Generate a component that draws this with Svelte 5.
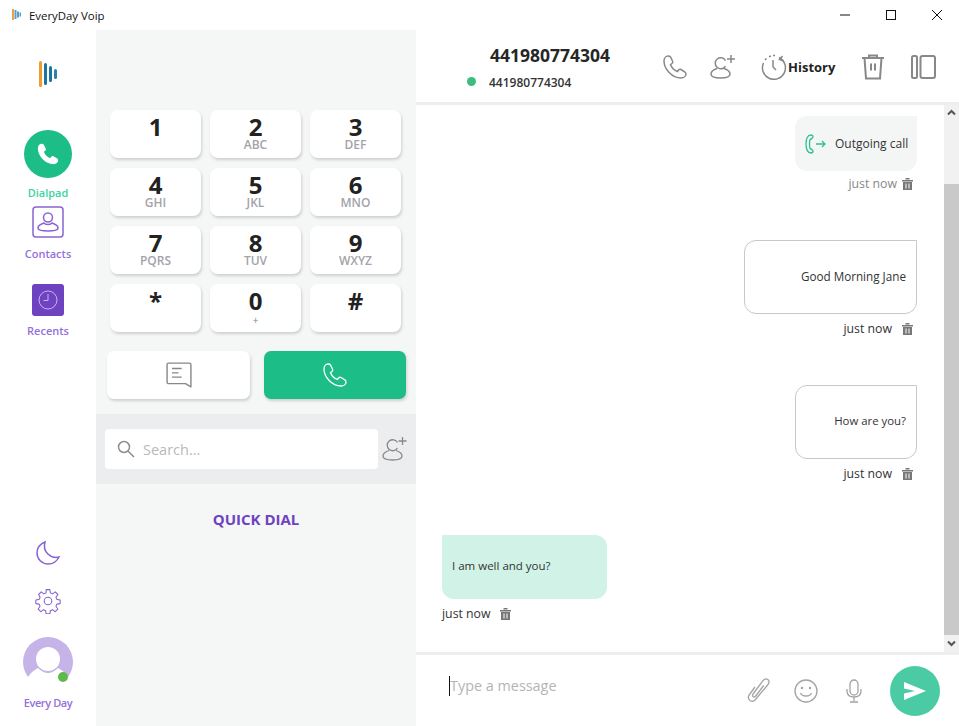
<script>
  const KEYS = [
    { d: '1', s: '' }, { d: '2', s: 'ABC' }, { d: '3', s: 'DEF' },
    { d: '4', s: 'GHI' }, { d: '5', s: 'JKL' }, { d: '6', s: 'MNO' },
    { d: '7', s: 'PQRS' }, { d: '8', s: 'TUV' }, { d: '9', s: 'WXYZ' },
    { d: '*', s: '' }, { d: '0', s: '+' }, { d: '#', s: '' },
  ];
  const PHONE = 'M6 2C4 2 2 4 2 7c0 8 8 17 17 17 3 0 5-2 5-4 0-1-.5-1.500-1-2l-4-2.500c-1-.5-2 0-2.500.5l-1 1.500c-3-1-6-4-7-7l1.500-1c.7-.5 1-1.500.5-2.500l-2-4C8 2.300 7 2 6 2z';
  const BIN = 'M0 2h11v1.500H0zM3.500 0h4v1.500h-4zM1 4h9v8H1zM3.500 5.500v5h1v-5zM6.500 5.500v5h1v-5z';
</script>

<div class="window">
  <header class="titlebar">
    <svg class="app-logo" width="10" height="12" viewBox="0 0 10 12">
      <rect x="0" y="0" width="2" height="11" fill="#f0a04b" />
      <rect x="2.500" y="1" width="2" height="9" fill="#5a9fc6" />
      <rect x="5" y="2.500" width="2" height="6" fill="#5a9fc6" />
      <rect x="7.500" y="3.500" width="1.500" height="4" fill="#5a9fc6" />
    </svg>
    <span class="app-title">EveryDay Voip</span>
    <div class="win-controls">
      <svg width="12" height="12" viewBox="0 0 12 12"><path d="M1 6h10" stroke="#111" fill="none" /></svg>
      <svg width="12" height="12" viewBox="0 0 12 12"><rect x="1.500" y="1.500" width="9" height="9" stroke="#111" fill="none" /></svg>
      <svg width="12" height="12" viewBox="0 0 12 12"><path d="M1 1l10 10M11 1L1 11" stroke="#111" fill="none" /></svg>
    </div>
  </header>

  <div class="body">
    <nav class="sidebar">
      <svg class="logo" width="18" height="26" viewBox="0 0 18 26">
        <rect x="0" y="0" width="3" height="26" rx="1.500" fill="#f29a2e" />
        <rect x="5" y="2" width="3" height="22" rx="1.500" fill="#1c75a0" />
        <rect x="10" y="5" width="3" height="16" rx="1.500" fill="#1c75a0" />
        <rect x="15" y="8" width="3" height="10" rx="1.500" fill="#2a83ac" />
      </svg>

      <div class="nav-dial">
        <div class="dial-circle">
          <svg width="24" height="24" viewBox="0 0 26 26"><path d={PHONE} fill="#fff" /></svg>
        </div>
        <span class="nav-label green">Dialpad</span>
      </div>

      <div class="nav-contacts">
        <svg width="32" height="32" viewBox="0 0 32 32" fill="none" stroke="#8a63d2" stroke-width="1.500">
          <rect x="1" y="1" width="30" height="30" rx="3" />
          <circle cx="16" cy="11.500" r="4.500" />
          <path d="M12 17c-3 1-6 3-6 5 0 2 4 3 10 3s10-1 10-3c0-2-3-4-6-5-1 2-7 2-8 0z" />
        </svg>
        <span class="nav-label">Contacts</span>
      </div>

      <div class="nav-recents">
        <div class="recents-box">
          <svg width="20" height="20" viewBox="0 0 20 20" fill="none" stroke="#c9b6ec" stroke-width="1">
            <circle cx="10" cy="10" r="9" />
            <path d="M10 4v6.500H5.500" />
          </svg>
        </div>
        <span class="nav-label">Recents</span>
      </div>

      <div class="side-bottom">
        <svg class="moon" width="26" height="26" viewBox="0 0 26 26" fill="none" stroke="#8a63d2" stroke-width="1.500">
          <path d="M10 2C5 4 2 8 2 13c0 6 5 11 11 11 5 0 9-3 11-7-8 2-17-5-14-15z" />
        </svg>
        <svg class="gear" width="26" height="26" viewBox="0 0 24 24" fill="none" stroke="#8a63d2" stroke-width="1">
          <circle cx="12" cy="12" r="3.500" />
          <path d="M10.300 1.500h3.400l.5 3 2 .9 2.500-1.800 2.400 2.400-1.800 2.500.9 2 3 .5v3.400l-3 .5-.9 2 1.800 2.500-2.400 2.400-2.500-1.800-2 .9-.5 3h-3.400l-.5-3-2-.9-2.500 1.800-2.400-2.400 1.800-2.500-.9-2-3-.5v-3.400l3-.5.9-2L3.300 6l2.400-2.400 2.500 1.800 2-.9z" stroke-linejoin="round" />
        </svg>
        <div class="avatar">
          <svg width="50" height="50" viewBox="0 0 50 50">
            <circle cx="25" cy="25" r="25" fill="#c6b3e8" />
            <circle cx="25" cy="22" r="12" fill="#fff" />
            <path d="M4 41Q10 33 15 31Q25 41 35 31Q40 33 46 41L50 50L0 50z" fill="#fff" />
          </svg>
          <span class="online"></span>
        </div>
        <span class="nav-label every">Every Day</span>
      </div>
    </nav>

    <section class="dialer">
      <div class="keypad">
        {#each KEYS as k (k.d)}
          <button type="button" class="key">
            <span class="digit">{k.d}</span>
            {#if k.s}<span class="letters" class:plus={k.s === '+'}>{k.s}</span>{/if}
          </button>
        {/each}
      </div>

      <div class="actions">
        <button type="button" class="act">
          <svg width="26" height="26" viewBox="0 0 24 24" fill="none" stroke="#888" stroke-width="1.300">
            <path d="M1 2.500C1 1.500 1.500 1 2.500 1h19c1 0 1.500.5 1.500 1.500V23l-5-3H2.500C1.500 20 1 19.500 1 18.500z" stroke-linejoin="round" />
            <path d="M5.500 6h9M5.500 10h6M5.500 14h9" />
          </svg>
        </button>
        <button type="button" class="act call">
          <svg width="26" height="26" viewBox="0 0 26 26"><path d={PHONE} fill="none" stroke="#fff" stroke-width="1.300" /></svg>
        </button>
      </div>

      <div class="search-band">
        <div class="search">
          <svg width="18" height="18" viewBox="0 0 18 18" fill="none" stroke="#8d8d8d" stroke-width="1.500">
            <circle cx="7" cy="7" r="5.500" />
            <path d="M11 11l6 6" />
          </svg>
          <span>Search...</span>
        </div>
        <svg class="add-user" width="26" height="26" viewBox="0 0 26 26" fill="none" stroke="#888" stroke-width="1.300">
          <path d="M15.500 6.500a5.500 5.500 0 1 0 0 5.500" />
          <path d="M16.500 5h8M20.500 1v8" />
          <path d="M7 14.500c-3 1-6 3-6 5.500 0 3 4 4 9.500 4s9.500-1 9.500-4c0-2.500-3-4.500-6-5.500" />
        </svg>
      </div>

      <div class="quick">QUICK DIAL</div>
    </section>

    <section class="chat">
      <header class="chat-head">
        <div class="who">
          <div class="who-name">441980774304</div>
          <div class="who-sub"><span class="status"></span><span>441980774304</span></div>
        </div>
        <div class="tools">
          <svg class="t-phone" width="26" height="26" viewBox="0 0 26 26"><path d={PHONE} fill="none" stroke="#888" stroke-width="1.500" /></svg>
          <svg class="t-add" width="26" height="26" viewBox="0 0 26 26" fill="none" stroke="#888" stroke-width="1.500">
            <path d="M15.500 6.500a5.500 5.500 0 1 0 0 5.500" />
            <path d="M17 5h8M21 1v8" />
            <path d="M7 14.500c-3 1-6 3-6 5.500 0 3 4 4 9.500 4s9.500-1 9.500-4c0-2.500-3-4.500-6-5.500" />
          </svg>
          <div class="t-history">
            <svg width="26" height="26" viewBox="0 0 26 26" fill="none" stroke="#888" stroke-width="1.500">
              <path d="M18 3.500A11.500 11.500 0 1 1 2.500 9" />
              <path d="M4 6l1.500-1.500M8 2.700l2-.7M12 1.500h2" />
              <path d="M21.500 2l-3 3.500 4 1.500" />
              <path d="M12 6v7l3 3" />
            </svg>
            <span>History</span>
          </div>
          <svg class="t-trash" width="24" height="26" viewBox="0 0 24 26" fill="none" stroke="#888" stroke-width="2">
            <path d="M1 4h22M8 4V1.500h8V4M3.500 4l1.500 20.500h14L20.500 4M10 9.500v7M14 9.500v7" />
          </svg>
          <svg class="t-split" width="25" height="26" viewBox="0 0 25 26" fill="none" stroke="#888" stroke-width="2">
            <rect x="1" y="2" width="5" height="22" rx="1.500" />
            <rect x="9.500" y="2" width="14.500" height="22" rx="2" />
          </svg>
        </div>
      </header>

      <div class="thread-wrap">
        <div class="thread">
          <div class="msg out m1">
            <div class="bubble note">
              <svg width="22" height="20" viewBox="0 0 22 20" fill="none" stroke="#2fc08f" stroke-width="1.300">
                <path d="M6 1C2.500 1 1 5 1 10s1.500 9 5 9c1.500 0 2-1 2-2l-1.500-2c-1 .5-2-.5-2-5s1-5.500 2-5L8 3c0-1-.5-2-2-2z" />
                <path d="M11 10h9M17 7l3 3-3 3" />
              </svg>
              <span>Outgoing call</span>
            </div>
            <div class="meta muted"><span>just now</span><svg class="bin" width="11" height="12" viewBox="0 0 11 12"><path d={BIN} fill="#777" fill-rule="evenodd" /></svg></div>
          </div>

          <div class="msg out m2">
            <div class="bubble line wide">Good Morning Jane</div>
            <div class="meta"><span>just now</span><svg class="bin" width="11" height="12" viewBox="0 0 11 12"><path d={BIN} fill="#777" fill-rule="evenodd" /></svg></div>
          </div>

          <div class="msg out m3">
            <div class="bubble line narrow">How are you?</div>
            <div class="meta"><span>just now</span><svg class="bin" width="11" height="12" viewBox="0 0 11 12"><path d={BIN} fill="#777" fill-rule="evenodd" /></svg></div>
          </div>

          <div class="msg in m4">
            <div class="bubble mint">I am well and you?</div>
            <div class="meta"><span>just now</span><svg class="bin" width="11" height="12" viewBox="0 0 11 12"><path d={BIN} fill="#777" fill-rule="evenodd" /></svg></div>
          </div>
        </div>

        <div class="scrollbar">
          <svg width="15" height="16" viewBox="0 0 15 16"><path d="M4 9.500l3.500-3.500 3.500 3.500" fill="none" stroke="#555" stroke-width="2" /></svg>
          <div class="track"><div class="thumb"></div></div>
          <svg width="15" height="17" viewBox="0 0 15 17"><path d="M4 6.500l3.500 3.500 3.500-3.500" fill="none" stroke="#555" stroke-width="2" /></svg>
        </div>
      </div>

      <footer class="compose">
        <div class="input"><span class="caret"></span><span>Type a message</span></div>
        <svg class="c-clip" width="24" height="25" viewBox="0 0 24 25" fill="none" stroke="#a3a3a3" stroke-width="1.300">
          <path d="M8 9l-5.500 7.500c-1.500 2-1.300 4.500.5 6 1.800 1.300 4 .8 5.500-1L21 6.500c1.500-2 1.300-3.800-.2-5-1.500-1-3.300-.6-4.800 1.200L6 16c-.8 1.200-.6 2.200.2 2.800.8.500 1.700.2 2.500-.8l8-10.500" />
        </svg>
        <svg class="c-smile" width="24" height="24" viewBox="0 0 24 24" fill="none" stroke="#a3a3a3" stroke-width="1.300">
          <circle cx="12" cy="12" r="11" />
          <path d="M6.500 14c1.500 4 9.500 4 11 0" />
          <circle cx="8" cy="9" r=".6" fill="#a3a3a3" />
          <circle cx="16" cy="9" r=".6" fill="#a3a3a3" />
        </svg>
        <svg class="c-mic" width="16" height="24" viewBox="0 0 16 24" fill="none" stroke="#a3a3a3" stroke-width="1.300">
          <rect x="4" y="1" width="8" height="15" rx="4" />
          <path d="M1 10v2c0 4 3 6 7 6s7-2 7-6v-2M8 18v4M4 23h8" />
        </svg>
        <button type="button" class="send" aria-label="Send">
          <svg width="22" height="18" viewBox="0 0 22 18"><path d="M0 0l22 9L0 18l0-6.500L11 9 0 6.500z" fill="#fff" /></svg>
        </button>
      </footer>
    </section>
  </div>
</div>

<style>
  :global(body) {
    margin: 0;
    background: #fff;
    overflow: hidden;
  }
  .window {
    width: 959px;
    height: 726px;
    display: flex;
    flex-direction: column;
    font-family: "Open Sans", "Noto Sans", sans-serif;
    color: #222;
  }
  button {
    font-family: inherit;
    border: none;
    padding: 0;
  }
  .titlebar {
    height: 30px;
    display: flex;
    align-items: center;
    flex-shrink: 0;
  }
  .app-logo {
    margin-left: 12px;
  }
  .app-title {
    margin-left: 7px;
    font-size: 11.400px;
    color: #111;
  }
  .win-controls {
    margin-left: auto;
    display: flex;
    gap: 34px;
    margin-right: 16px;
  }
  .body {
    flex: 1;
    display: flex;
    min-height: 0;
  }

  .sidebar {
    width: 96px;
    flex-shrink: 0;
    display: flex;
    flex-direction: column;
    align-items: center;
  }
  .logo {
    margin-top: 31px;
  }
  .nav-dial {
    margin-top: 43px;
    display: flex;
    flex-direction: column;
    align-items: center;
  }
  .dial-circle {
    width: 48px;
    height: 48px;
    border-radius: 50%;
    background: #1dbd88;
    display: flex;
    align-items: center;
    justify-content: center;
  }
  .nav-label {
    font-size: 11px;
    font-weight: 600;
    line-height: 15px;
    color: #9470db;
  }
  .nav-label.green {
    color: #3ed3a2;
    margin-top: 7px;
  }
  .nav-contacts {
    display: flex;
    flex-direction: column;
    align-items: center;
    margin-top: 6px;
  }
  .nav-contacts .nav-label {
    margin-top: 8px;
  }
  .nav-recents {
    display: flex;
    flex-direction: column;
    align-items: center;
    margin-top: 23px;
  }
  .recents-box {
    width: 32px;
    height: 32px;
    border-radius: 3px;
    background: #6f42c1;
    display: flex;
    align-items: center;
    justify-content: center;
  }
  .recents-box + .nav-label {
    margin-top: 7px;
  }
  .side-bottom {
    margin-top: auto;
    display: flex;
    flex-direction: column;
    align-items: center;
    padding-bottom: 16px;
  }
  .gear {
    margin-top: 22px;
  }
  .avatar {
    position: relative;
    margin-top: 23px;
    width: 50px;
    height: 50px;
  }
  .online {
    position: absolute;
    right: 5px;
    bottom: 5px;
    width: 10px;
    height: 10px;
    border-radius: 50%;
    background: #5cb94a;
  }
  .nav-label.every {
    margin-top: 8px;
    letter-spacing: -0.4px;
  }

  .dialer {
    width: 320px;
    flex-shrink: 0;
    background: #f5f7f7;
    display: flex;
    flex-direction: column;
  }
  .keypad {
    margin: 80px 15px 0 14px;
    display: grid;
    grid-template-columns: repeat(3, 91px);
    grid-auto-rows: 48px;
    gap: 10px 9px;
  }
  .key {
    background: #fff;
    border-radius: 8px;
    box-shadow: 1px 2px 3px rgba(0, 0, 0, 0.16);
    display: flex;
    flex-direction: column;
    align-items: center;
    color: #222;
  }
  .digit {
    font-size: 24px;
    font-weight: 700;
    line-height: 24px;
    margin-top: 5px;
    height: 23px;
  }
  .letters {
    font-size: 12px;
    font-weight: 600;
    line-height: 14px;
    color: #a3a3a9;
  }
  .letters.plus {
    font-size: 10px;
    font-weight: 400;
    margin-top: 1px;
    color: #888;
  }
  .actions {
    display: flex;
    gap: 14px;
    margin: 19px 10px 0 11px;
  }
  .act {
    width: 143px;
    height: 48px;
    background: #fff;
    border-radius: 7px;
    box-shadow: 1px 2px 3px rgba(0, 0, 0, 0.16);
    display: flex;
    align-items: center;
    justify-content: center;
  }
  .act.call {
    width: 142px;
    background: #1dbd88;
  }
  .search-band {
    margin-top: 15px;
    height: 70px;
    background: #ecedef;
    display: flex;
    align-items: center;
    padding-left: 9px;
    flex-shrink: 0;
  }
  .search {
    width: 273px;
    height: 40px;
    background: #fff;
    border-radius: 4px;
    display: flex;
    align-items: center;
    box-sizing: border-box;
    padding-left: 12px;
    gap: 8px;
    font-size: 14.500px;
    color: #b9b9b9;
  }
  .add-user {
    margin-left: 4px;
  }
  .quick {
    margin-top: 25px;
    text-align: center;
    font-size: 15px;
    font-weight: 700;
    line-height: 21px;
    color: #6f42c1;
  }

  .chat {
    flex: 1;
    min-width: 0;
    display: flex;
    flex-direction: column;
  }
  .chat-head {
    height: 72px;
    flex-shrink: 0;
    display: flex;
    border-bottom: 3px solid #eeeeee;
  }
  .who {
    box-sizing: border-box;
    padding-left: 51px;
    width: 246px;
    flex-shrink: 0;
  }
  .who-name {
    margin-top: 13px;
    margin-left: 23px;
    font-size: 17.500px;
    font-weight: 700;
    line-height: 24px;
    color: #262626;
  }
  .who-sub {
    display: flex;
    align-items: center;
    margin-top: 8px;
    font-size: 12px;
    font-weight: 600;
    line-height: 16px;
    color: #333;
  }
  .status {
    width: 9px;
    height: 9px;
    border-radius: 50%;
    background: #3dbd7d;
    margin-right: 13px;
    position: relative;
    top: -2px;
  }
  .tools {
    display: flex;
    align-items: center;
    padding-top: 2px;
  }
  .t-add {
    margin-left: 22px;
  }
  .t-history {
    display: flex;
    align-items: center;
    margin-left: 25px;
    font-size: 13px;
    font-weight: 700;
    color: #222;
    gap: 1px;
  }
  .t-trash {
    margin-left: 26px;
  }
  .t-split {
    margin-left: 26px;
  }

  .thread-wrap {
    flex: 1;
    min-height: 0;
    display: flex;
  }
  .thread {
    flex: 1;
    min-width: 0;
    padding: 11px 27px 0 26px;
    box-sizing: border-box;
  }
  .msg {
    display: flex;
    flex-direction: column;
  }
  .msg.out {
    align-items: flex-end;
  }
  .msg.in {
    align-items: flex-start;
  }
  .m2 {
    margin-top: 47px;
  }
  .m3 {
    margin-top: 47px;
  }
  .m4 {
    margin-top: 52px;
  }
  .bubble {
    box-sizing: border-box;
    font-size: 11.700px;
    line-height: 16px;
    color: #333;
    display: flex;
    align-items: center;
  }
  .note {
    width: 122px;
    height: 55px;
    background: #f4f6f6;
    border-radius: 12px 0 12px 12px;
    padding-left: 10px;
    gap: 8px;
    font-size: 12px;
  }
  .line {
    height: 74px;
    border: 1px solid #c8c8c8;
    border-radius: 12px 0 12px 12px;
    justify-content: flex-end;
    padding: 0 10px 2px 0;
  }
  .wide {
    width: 173px;
  }
  .narrow {
    width: 122px;
    font-size: 11.400px;
  }
  .mint {
    width: 165px;
    height: 64px;
    background: #d1f2e6;
    border-radius: 0 12px 12px 12px;
    padding: 0 0 2px 10px;
    font-size: 11.500px;
  }
  .meta {
    display: flex;
    align-items: center;
    gap: 10px;
    font-size: 12.300px;
    line-height: 18px;
    margin-top: 6px;
    margin-right: 4px;
    color: #333;
  }
  .meta.muted {
    color: #888;
    margin-top: 4px;
    gap: 5px;
  }
  .in .meta {
    margin-right: 0;
    gap: 9px;
  }
  .scrollbar {
    width: 15px;
    flex-shrink: 0;
    background: #f1f1f1;
    display: flex;
    flex-direction: column;
  }
  .track {
    flex: 1;
    padding-top: 63px;
  }
  .thumb {
    height: 451px;
    background: #c9c9c9;
  }

  .compose {
    height: 74px;
    flex-shrink: 0;
    border-top: 3px solid #eeeeee;
    display: flex;
    align-items: center;
    box-sizing: border-box;
  }
  .input {
    flex: 1;
    display: flex;
    align-items: center;
    margin-left: 33px;
    font-size: 14.400px;
    color: #b4b4b8;
    position: relative;
    top: -5px;
  }
  .caret {
    width: 1px;
    height: 20px;
    background: #111;
  }
  .c-smile {
    margin-left: 23px;
  }
  .c-mic {
    margin-left: 28px;
  }
  .send {
    width: 50px;
    height: 50px;
    border-radius: 50%;
    background: #4acba3;
    margin-left: 28px;
    margin-right: 19px;
    display: flex;
    align-items: center;
    justify-content: center;
  }
</style>
